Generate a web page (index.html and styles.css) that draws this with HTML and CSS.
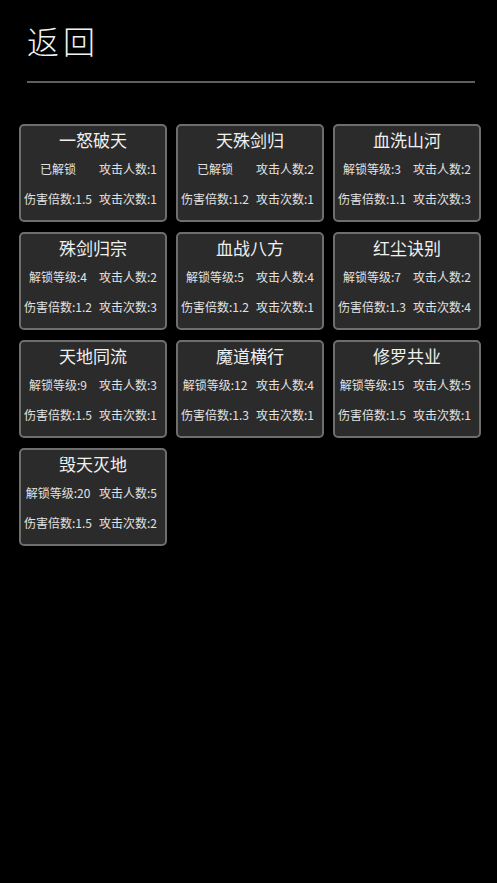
FILE: index.html
```html
<!DOCTYPE html>
<html lang="zh">
<head>
<meta charset="utf-8">
<link rel="stylesheet" href="styles.css">
</head>
<body>
<header class="top">
  <div class="back">返回</div>
  <div class="rule"></div>
</header>
<main class="grid">
  <div class="card"><div class="name">一怒破天</div><div class="stats"><span>已解锁</span><span>攻击人数:1</span><span>伤害倍数:1.5</span><span>攻击次数:1</span></div></div>
  <div class="card"><div class="name">天殊剑归</div><div class="stats"><span>已解锁</span><span>攻击人数:2</span><span>伤害倍数:1.2</span><span>攻击次数:1</span></div></div>
  <div class="card"><div class="name">血洗山河</div><div class="stats"><span>解锁等级:3</span><span>攻击人数:2</span><span>伤害倍数:1.1</span><span>攻击次数:3</span></div></div>
  <div class="card"><div class="name">殊剑归宗</div><div class="stats"><span>解锁等级:4</span><span>攻击人数:2</span><span>伤害倍数:1.2</span><span>攻击次数:3</span></div></div>
  <div class="card"><div class="name">血战八方</div><div class="stats"><span>解锁等级:5</span><span>攻击人数:4</span><span>伤害倍数:1.2</span><span>攻击次数:1</span></div></div>
  <div class="card"><div class="name">红尘诀别</div><div class="stats"><span>解锁等级:7</span><span>攻击人数:2</span><span>伤害倍数:1.3</span><span>攻击次数:4</span></div></div>
  <div class="card"><div class="name">天地同流</div><div class="stats"><span>解锁等级:9</span><span>攻击人数:3</span><span>伤害倍数:1.5</span><span>攻击次数:1</span></div></div>
  <div class="card"><div class="name">魔道横行</div><div class="stats"><span>解锁等级:12</span><span>攻击人数:4</span><span>伤害倍数:1.3</span><span>攻击次数:1</span></div></div>
  <div class="card"><div class="name">修罗共业</div><div class="stats"><span>解锁等级:15</span><span>攻击人数:5</span><span>伤害倍数:1.5</span><span>攻击次数:1</span></div></div>
  <div class="card"><div class="name">毁天灭地</div><div class="stats"><span>解锁等级:20</span><span>攻击人数:5</span><span>伤害倍数:1.5</span><span>攻击次数:2</span></div></div>
</main>
</body>
</html>
```
FILE: styles.css
```css
html, body {
  margin: 0;
  padding: 0;
  background: #000;
  height: 100%;
}
body {
  font-family: "Noto Sans CJK SC", "Noto Sans", sans-serif;
  color: #eee;
}
.top {
  padding: 17px 22px 0 27px;
}
.back {
  font-size: 32px;
  line-height: 46px;
  letter-spacing: 4px;
  font-weight: 300;
  color: #f2f2f2;
  height: 46px;
}
.rule {
  margin-top: 18px;
  height: 2px;
  background: #5e5e5e;
}
.grid {
  display: grid;
  grid-template-columns: repeat(3, 148px);
  grid-auto-rows: 98px;
  column-gap: 9px;
  row-gap: 10px;
  padding: 41px 0 0 19px;
}
.card {
  box-sizing: border-box;
  border: 2px solid #6e6e6e;
  border-radius: 5px;
  background: #2b2b2b;
  display: flex;
  flex-direction: column;
  align-items: stretch;
}
.name {
  padding-top: 2px;
  height: 24px;
  line-height: 24px;
  font-size: 17px;
  text-align: center;
  color: #f0f0f0;
}
.stats {
  margin-top: 2px;
  display: grid;
  grid-template-columns: 1fr 1fr;
  grid-auto-rows: 30px;
  font-size: 12px;
  line-height: 30px;
  color: #e2e2e2;
  padding: 0 2px;
}
.stats span {
  text-align: center;
  white-space: nowrap;
}
```
